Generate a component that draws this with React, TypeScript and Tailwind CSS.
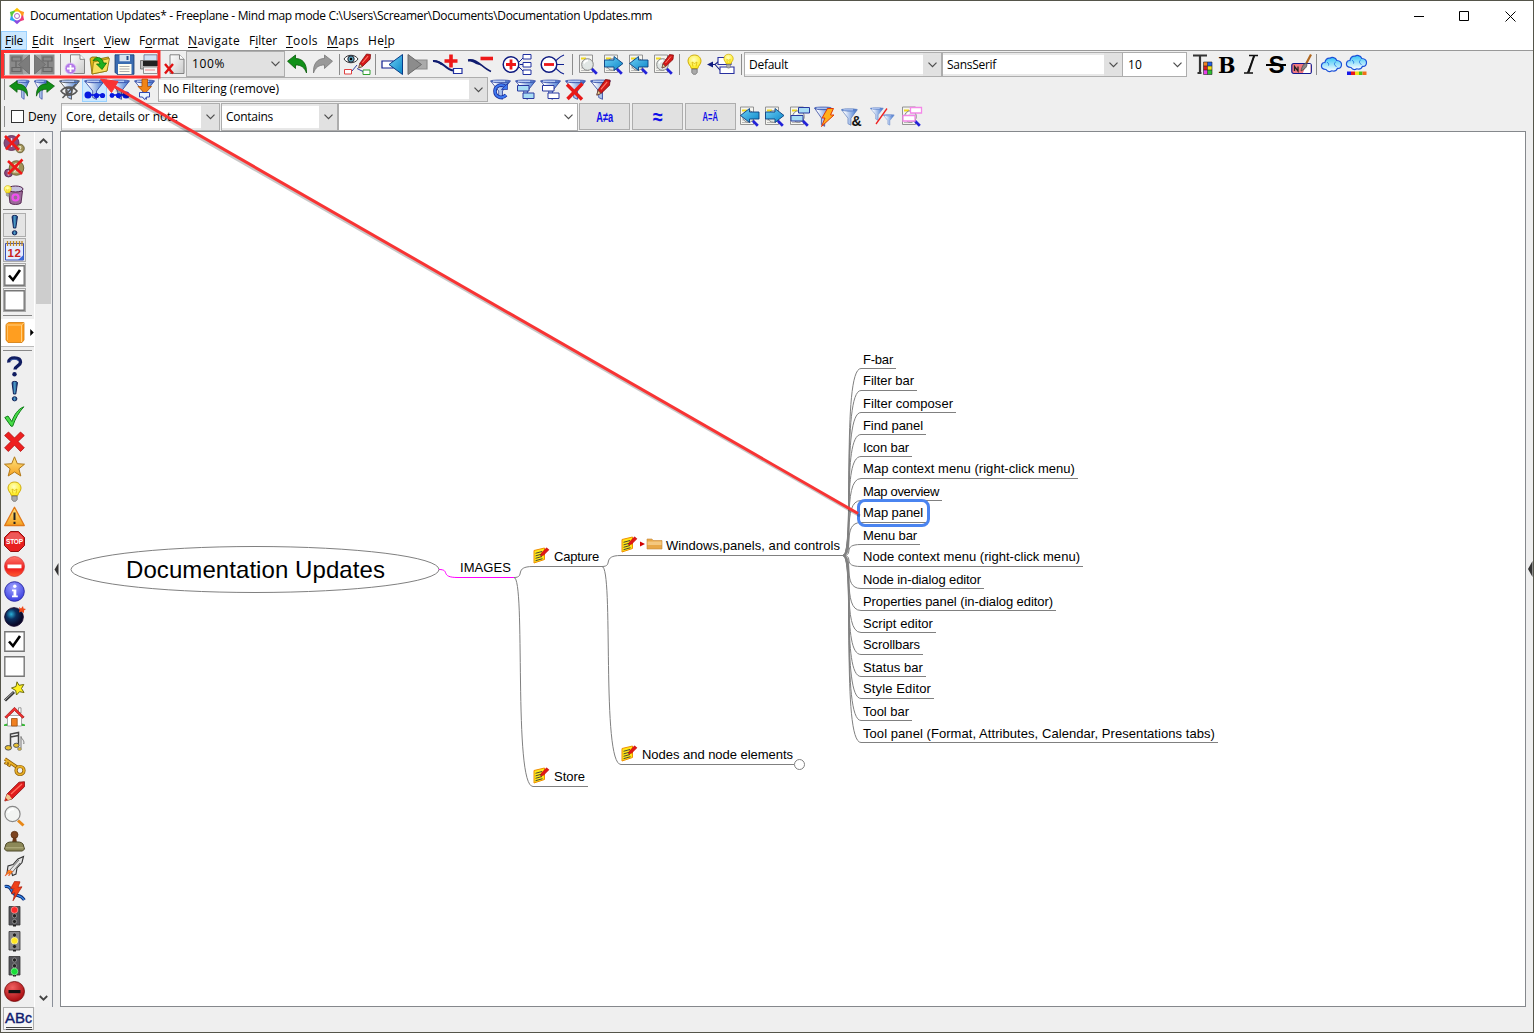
import React, { useLayoutEffect, useRef, useState } from "react";

/* Text tracked so that it fills a given width. */
function Fit({ w, children, className = "" }: { w: number; children: React.ReactNode; className?: string }) {
  const ref = useRef<HTMLSpanElement>(null);
  const [ls, setLs] = useState(0);
  useLayoutEffect(() => {
    const el = ref.current;
    if (!el) return;
    const n = (el.textContent || "").length;
    setLs((w - el.getBoundingClientRect().width) / Math.max(1, n));
  }, [w]);
  return (
    <span ref={ref} className={"inline-block whitespace-pre " + className} style={{ letterSpacing: ls }}>
      {children}
    </span>
  );
}

function Ic({ children, className = "h-[21px] w-[21px]" }: { children: React.ReactNode; className?: string }) {
  return (
    <svg viewBox="0 0 21 21" className={className + " shrink-0 overflow-visible"} fill="none">
      {children}
    </svg>
  );
}

function Cell({ children, className = "w-[25px]" }: { children?: React.ReactNode; className?: string }) {
  return <div className={"flex h-[25px] shrink-0 items-center justify-center " + className}>{children}</div>;
}

function Sep({ className = "w-[5px]" }: { className?: string }) {
  return (
    <div className={"flex h-[25px] shrink-0 items-center justify-center " + className}>
      <div className="h-[21px] w-px bg-[#8c8c8c]" />
    </div>
  );
}

function Chevron() {
  return (
    <svg viewBox="0 0 9 6" className="h-[6px] w-[9px] shrink-0" fill="none">
      <path d="M.5 .7 4.5 4.7 8.5 .7" stroke="#4d4d4d" strokeWidth="1.2" />
    </svg>
  );
}

function Combo({ className, text, w, editable = true }: { className: string; text?: string; w?: number; editable?: boolean }) {
  return (
    <div className={"flex shrink-0 items-center border border-[#adadad] pr-[4px] " + className}>
      <div className={"mr-[5px] flex h-full flex-1 items-center " + (editable ? "border-y-2 border-[#e8e8e8] bg-white pl-[4px]" : "pl-[5px]")}>
        {text && <Fit w={w || 50}>{text}</Fit>}
      </div>
      <Chevron />
    </div>
  );
}

/* ---- shared drawing parts ---- */
const Defs = () => (
  <svg className="absolute h-0 w-0">
    <defs>
      <linearGradient id="fun" x1="0" x2="1" y1="0" y2="0">
        <stop offset="0.15" stopColor="#ffffff" />
        <stop offset="1" stopColor="#3a72d0" />
      </linearGradient>
      <linearGradient id="cy" x1="0" x2="1" y1="0" y2="1">
        <stop offset="0" stopColor="#6fd0f5" />
        <stop offset="1" stopColor="#0a86c8" />
      </linearGradient>
      <linearGradient id="cld" x1="0" x2="0" y1="0" y2="1">
        <stop offset="0" stopColor="#35c4f5" />
        <stop offset="1" stopColor="#ffffff" />
      </linearGradient>
      <linearGradient id="pg" x1="0" x2="1" y1="0" y2="1">
        <stop offset="0" stopColor="#ffffff" />
        <stop offset="1" stopColor="#c9c9c9" />
      </linearGradient>
      <linearGradient id="gold" x1="0" x2="0" y1="0" y2="1">
        <stop offset="0" stopColor="#ffe680" />
        <stop offset="1" stopColor="#f5a020" />
      </linearGradient>
      <linearGradient id="redg" x1="0" x2="0" y1="0" y2="1">
        <stop offset="0" stopColor="#ff7a70" />
        <stop offset="0.6" stopColor="#ee1c1c" />
        <stop offset="1" stopColor="#ff5a30" />
      </linearGradient>
      <linearGradient id="bang" x1="0" x2="1" y1="0" y2="0">
        <stop offset="0" stopColor="#0c2c7c" />
        <stop offset="0.5" stopColor="#4fa0c8" />
        <stop offset="1" stopColor="#0a2468" />
      </linearGradient>
      <radialGradient id="bomb" cx="0.35" cy="0.35" r="0.6">
        <stop offset="0" stopColor="#2ab0d8" />
        <stop offset="0.45" stopColor="#0c3060" />
        <stop offset="1" stopColor="#080828" />
      </radialGradient>
      <radialGradient id="blu" cx="0.45" cy="0.3" r="0.7">
        <stop offset="0" stopColor="#a0a4ff" />
        <stop offset="1" stopColor="#3a3ee0" />
      </radialGradient>
      <radialGradient id="dred" cx="0.4" cy="0.3" r="0.7">
        <stop offset="0" stopColor="#f06060" />
        <stop offset="1" stopColor="#a80c10" />
      </radialGradient>
      <radialGradient id="blb" cx="0.45" cy="0.35" r="0.6">
        <stop offset="0" stopColor="#ffffc0" />
        <stop offset="1" stopColor="#ffec20" />
      </radialGradient>
    </defs>
  </svg>
);

const Funnel = ({ c = "#2c3f9c" }: { c?: string }) => (
  <g>
    <path d="M1 2.500 8.700 12v6.500l3.800 1.800v-8.300L20 2.500z" fill="url(#fun)" stroke={c} strokeWidth=".8" />
    <path d="M.5 2c0-1.300 20-1.300 20 0 0 2.300-20 2.300-20 0z" fill="#5c84d4" stroke={c} strokeWidth=".7" />
    <path d="M3 2.200h12" stroke="#dfe9ff" strokeWidth="1" />
  </g>
);
const Page = () => (
  <g>
    <path d="M3 .8h9.500l4.500 4.500V19.500H3z" fill="url(#pg)" stroke="#777" strokeWidth=".9" />
    <path d="M12.500.8v4.500H17" fill="#fff" stroke="#777" strokeWidth=".9" />
  </g>
);
const Lens = () => (
  <g>
    <path d="M1.500 1H14.500V18.500H1.500z" fill="#f5f5f0" stroke="#888" strokeWidth=".9" />
    <path d="M3 4.500h5" stroke="#f0d820" strokeWidth="2" />
    <path d="M3 14h5M3 16.500h8" stroke="#aaa" strokeWidth=".8" />
    <path d="m13.800 14.800 5 4.900" stroke="#2222d8" strokeWidth="2.800" />
    <circle cx="9.500" cy="10.500" r="5.800" fill="#dfe6e4" fillOpacity=".95" stroke="#888" strokeWidth="1" />
    <path d="M6 9.500c.6-2 2.200-3 4-2.800" stroke="#fff" strokeWidth="1.600" />
  </g>
);
const ArrR = () => <path d="M1.500 6H11V2.500l9 7-9 7V13H1.500z" fill="url(#cy)" stroke="#0c4080" strokeWidth=".9" />;
const ArrL = () => <path d="M20 6h-9.500V2.500l-9 7 9 7V13H20z" fill="url(#cy)" stroke="#0c4080" strokeWidth=".9" />;
const Pen = () => (
  <g>
    <path d="m9 14 1-4.500L16.500.5l4 .5-.5 4.500-7.300 7z" fill="#d41818" stroke="#7c0808" strokeWidth=".7" />
    <path d="m9 14 1-4 2.500 2.500z" fill="#f4cf90" stroke="#444" strokeWidth=".6" />
    <path d="m12.500 9 5.500-6.500" stroke="#ff7a6a" strokeWidth="1" />
  </g>
);
const Undo = ({ c, s }: { c: string; s: string }) => (
  <path d="M.5 7.200 8.500 1v3.500c7 0 11.500 5 11 14.500-2-5.500-5-8-11-8v3.500z" fill={c} stroke={s} strokeWidth=".8" />
);
const Redo = ({ c, s }: { c: string; s: string }) => (
  <g transform="translate(21 0) scale(-1 1)"><Undo c={c} s={s} /></g>
);
const Bulb = () => (
  <g>
    <path d="M10.500 1C6.500 1 4 3.800 4 7.200c0 3 2.800 4.500 3.300 7.300h6.400c.5-2.800 3.300-4.300 3.300-7.300C17 3.800 14.500 1 10.500 1z" fill="url(#blb)" stroke="#c8a400" strokeWidth=".9" />
    <path d="M7.800 15h5.400v3.500l-1.500 1.800H9.300l-1.500-1.800z" fill="#aaa" stroke="#666" strokeWidth=".7" />
    <path d="M9 12.500 8 8l2.500 1.500L13 8l-1 4.500" stroke="#d8b400" strokeWidth=".7" />
  </g>
);
const Cloud = () => (
  <g>
    <path d="M5 13.500C1.500 13.500 0 11.500.5 9.200c.4-2 2-2.800 3.400-2.700C4.500 3.500 6.800 2 9 2.200c1.600-1.200 5.500-1.200 6.800 2.300 3.200.2 5 2 4.700 4.500-.3 2.400-2.200 3.500-4 3.300-1 2.200-3.400 3.300-5.600 2.500-2.200 1.200-4.700.500-5.900-1.300z" fill="url(#cld)" stroke="#1a4fd8" strokeWidth="1.200" />
    <path d="M6 6.500c1.500 0 2 1.500 1.500 3M14.500 6c-1.500 1-1.500 3.500 1 4.500" stroke="#1a6fe0" strokeWidth=".9" />
  </g>
);
const CheckBox = ({ on }: { on?: boolean }) => (
  <g>
    <path d="M.8.8h19.400v19.400H.8z" fill="#fff" stroke="#777" strokeWidth="1.400" />
    {on && <path d="m5 10.500 4 4.500 7-10" stroke="#000" strokeWidth="2.600" />}
  </g>
);
const Note = () => (
  <svg viewBox="0 0 16 17" className="h-[17px] w-[16px] overflow-visible" fill="none">
    <path d="M1 3.500 11.500 1v11.500L1 16z" fill="#ffe818" stroke="#f09000" strokeWidth="1" />
    <path d="m2.500 6.300 6.500-1.800M2.500 8.900 9 7M2.500 11.300 9 9.500M2.500 13.700 9.500 11.700" stroke="#333" strokeWidth=".9" />
    <path d="m7.500 9 1-3L13.500.8l2.500 2-5.500 5.500z" fill="#e01818" stroke="#b00" strokeWidth=".5" />
  </svg>
);
const Bang = () => (
  <g>
    <path d="M8 1.500c0-1.500 5.500-1.500 5.500 0L11.800 13H9.500z" fill="url(#bang)" stroke="#081850" strokeWidth=".9" />
    <ellipse cx="10.600" cy="17.800" rx="2.300" ry="2.100" fill="url(#bang)" stroke="#081850" strokeWidth=".9" />
  </g>
);
const Light = ({ on }: { on: number }) => (
  <g>
    <path d="M5 .5h11V19H5z" fill={on === 1 ? "#88888c" : "#55555a"} stroke="#333" strokeWidth=".8" />
    <path d="M9 19h3v1.500H9z" fill="#222" />
    {[4, 9.8, 15.5].map((y, i) => (
      <circle key={i} cx="10.500" cy={y} r={i === on ? 3.3 : 2.1} fill={i === on ? ["#ff2a2a", "#ffe820", "#18e038"][i] : "#222"} stroke={i === on ? ["#ff9090", "#fff6a0", "#80f090"][i] : "#999"} strokeWidth=".8" />
    ))}
  </g>
);
const Badge = ({ flip }: { flip?: boolean }) => (
  <g>
    <circle cx={flip ? 4.5 : 7.5} cy={flip ? 14 : 9} r={flip ? 4 : 7.5} fill="#8a4a7c" stroke="#55224c" strokeWidth=".8" />
    <path d={flip ? "M4.500 11.500v5" : "M7.500 4v9"} stroke="#ecd8e8" strokeWidth="1.500" />
    <circle cx={flip ? 12.5 : 16} cy={flip ? 9 : 14.5} r={flip ? 7.3 : 4.3} fill="#a09258" stroke="#5c5228" strokeWidth=".8" />
    <path d={flip ? "M10 6c3-3 6 0 3.500 3L10 13h6" : "M14.500 13.500c1.500-2 3.500-.5 1.500 1.500l-1.500 1.800h3"} stroke="#eee8c8" strokeWidth="1.100" />
    <path d={flip ? "m4 2 14 13M18.500.5 4 15" : "m1 2 14 14M15.500.5 2 15.500"} stroke="#f01818" strokeWidth="2.600" />
  </g>
);

const sideTop = [
  <Badge />,
  <Badge flip />,
  <g>
    <path d="M4.500 7h14l-1.500 12c-2 2-9 2-11 0z" fill="#9a6a98" stroke="#50204c" strokeWidth=".9" />
    <ellipse cx="11.500" cy="5" rx="7.500" ry="3" fill="#c4c0dc" stroke="#50204c" />
    <circle cx="11.500" cy="13.500" r="3" stroke="#f050f0" strokeWidth="2.200" />
    <g transform="translate(-2 1) scale(.55)"><Bulb /></g>
  </g>,
];
const sideBoxed = [
  <Bang />,
  <g>
    <path d="M1.500 3.500h18V20h-18z" fill="#e4ecff" stroke="#3850b8" strokeWidth="1" />
    <path d="M14 20h5.500v-5z" fill="#3a68d8" />
    <path d="M3.500 1v5M6.500 1v5M9.500 1v5M12.500 1v5M15.500 1v5M18 1v5" stroke="#c08820" strokeWidth="1.300" />
    <text x="3.500" y="16.500" fontSize="11.500" fontWeight="700" fill="#c82020" fontFamily="Liberation Sans, sans-serif" textLength="13.500">12</text>
  </g>,
];
const sideMain = [
  <g>
    <path d="M4.800 6.500C4.500 3.500 7 2 10.500 2c3.500 0 6 1.300 6 4.300 0 3.500-5.500 3.700-5.500 7.200" stroke="#101c60" strokeWidth="3.400" />
    <path d="M6 5C7 3 13 2.500 14.500 5" stroke="#4a70c0" strokeWidth=".8" />
    <circle cx="10.500" cy="18.300" r="2.200" fill="#101c60" />
  </g>,
  <Bang />,
  <path d="M.8 11.500 4 10l3.800 5.500C10 9 14 3 19.800.8 15 6 11 13 8.700 20.200H7z" fill="#48dc48" stroke="#108018" strokeWidth="1" />,
  <path d="M4.500 1 10.500 7l6-6 3.800 3.500-6.300 6 6.300 6.300-3.800 3.700-6-6.300L4.300 20.500.6 16.800l6.300-6.300L.6 4.500z" fill="#ee2020" stroke="#b00c0c" strokeWidth=".8" />,
  <path d="m10.500.8 2.800 6.900 7.200.5-5.600 4.600 1.900 7.200-6.300-4-6.300 4 1.900-7.200L.5 8.200l7.200-.5z" fill="url(#gold)" stroke="#b07818" strokeWidth="1" />,
  <Bulb />,
  <g>
    <path d="M10.500 1.200 20.300 19.500H.7z" fill="url(#gold)" stroke="#e07818" strokeWidth="1.300" strokeLinejoin="round" />
    <path d="M10.500 6.500v7.500M10.500 15.700v2.300" stroke="#222" strokeWidth="2" />
  </g>,
  <g>
    <path d="M6.500.5h8l6 6v8l-6 6h-8l-6-6v-8z" fill="#e82020" stroke="#901010" strokeWidth="1" />
    <path d="M7 1.500h7l5 5v3H2v-3z" fill="#fff" fillOpacity=".25" />
    <text x="2" y="13" fontSize="6.500" fontWeight="700" fill="#fff" fontFamily="Liberation Sans, sans-serif" textLength="17">STOP</text>
  </g>,
  <g><circle cx="10.500" cy="10.500" r="10" fill="url(#redg)" stroke="#d03030" strokeWidth=".7" /><path d="M3.500 8.500h14v3.800h-14z" fill="#fff" /></g>,
  <g>
    <circle cx="10.500" cy="10.500" r="9.800" fill="url(#blu)" stroke="#3030a8" strokeWidth="1" />
    <circle cx="10.800" cy="5.300" r="1.700" fill="#fff" />
    <path d="M8 8.500h4.300v6h1.500v1.800H8v-1.800h1.500v-4.200H8z" fill="#fff" />
  </g>,
  <g>
    <circle cx="10" cy="11" r="9.300" fill="url(#bomb)" stroke="#180c30" strokeWidth="1" />
    <path d="m15 1 2 1.500L19 0l.5 2.500L22 3l-2 1.500L20 7l-2.500-1.500L15 6.500l.5-2.500z" fill="#f04818" />
  </g>,
  <CheckBox on />,
  <CheckBox />,
  <g>
    <path d="m1 19.500 9-8.500" stroke="#333" strokeWidth="3" /><path d="m1 19 8.500-8" stroke="#aaa" strokeWidth="1" />
    <path d="m13 .8 2 3.500 4.800-.8-2.300 4 2.500 4-4.500-.8L12.500 14l-.8-4.500L7.500 7l4.500-1.500z" fill="#fff020" stroke="#6c6c10" strokeWidth="1" />
  </g>,
  <g>
    <path d="M0 18.500c6-2.500 15-2.500 21 0V20H0z" fill="#38b838" />
    <path d="M3.500 9.500h14V20h-14z" fill="#fff" stroke="#888" strokeWidth=".7" />
    <path d="M14.500 1.800h2.500V7h-2.500z" fill="#fff" stroke="#777" strokeWidth=".7" />
    <path d="M.8 11 10.500 1.300 20.200 11l-1.700 1.200-8-7.700-8 7.700z" fill="#f03030" stroke="#a01818" strokeWidth=".7" />
    <path d="M7.500 12.500h5.700V20H7.500z" fill="#f08020" stroke="#a05010" strokeWidth=".8" />
  </g>,
  <g>
    <path d="M6.500 16V3l8-1.500V13.500M6.500 6l8-1.500" stroke="#444" strokeWidth="1.500" />
    <ellipse cx="4.300" cy="16.800" rx="3.200" ry="2.300" fill="#e8c030" stroke="#555" /><ellipse cx="12.300" cy="14.300" rx="2.800" ry="2.100" fill="#e8c030" stroke="#555" />
    <path d="M17 17V5.500c.5 3 3.500 3 2.800 7.500" stroke="#777" strokeWidth="1" /><ellipse cx="15.500" cy="18" rx="2" ry="1.400" fill="#e8c030" stroke="#777" strokeWidth=".7" />
  </g>,
  <g>
    <path d="m1 3 12.500 8.500M3 4.500l-1.500 4M6 6.800 4.500 10.500" stroke="#8c5c08" strokeWidth="3.400" /><path d="m1 3 12.500 8.500M3 4.500 2 8M6 6.800 5 10" stroke="#e8b028" strokeWidth="1.900" />
    <circle cx="16" cy="14.500" r="4" stroke="#8c5c08" strokeWidth="3.200" /><circle cx="16" cy="14.500" r="4" stroke="#e8b028" strokeWidth="1.800" />
  </g>,
  <g>
    <path d="m.8 20 2.200-7L15 1.200l5.500-.5v5L8 18z" fill="#e01c1c" stroke="#881010" strokeWidth=".8" />
    <path d="m.8 20 2.200-7 2.500 1.500L8 18z" fill="#f0c890" /><path d="m.8 20 1-3 2 2z" fill="#c00c0c" /><path d="m7 13 11-10" stroke="#ff7060" strokeWidth="1.300" />
  </g>,
  <g>
    <path d="m14 14.500 5.500 5" stroke="#e88818" strokeWidth="3" />
    <circle cx="8.500" cy="8" r="7.600" fill="#f2f4f2" stroke="#888" strokeWidth="1.200" /><path d="M4 7c1-3 4-4 6-3.500" stroke="#fff" strokeWidth="2" />
  </g>,
  <g>
    <circle cx="10.500" cy="3.800" r="3.500" fill="#7c4420" stroke="#502808" strokeWidth=".7" /><path d="M9 7h3.200l.8 5H8z" fill="#6c3818" />
    <path d="M2 13c2-2.500 5-2 8.500-2s6.500-.5 8.500 2l1.500 5-2 2h-16l-2-2z" fill="#8c8858" stroke="#4c4828" strokeWidth="1" /><path d="M1.500 16.800h18" stroke="#c4c090" strokeWidth=".8" />
  </g>,
  <g>
    <path d="m3 17 1-7 5-1.500L14 3l5.500-2.500-1.500 6-5 5.500-1 6-3.500 1.500-1-3.500z" fill="#e4e4e4" stroke="#333" strokeWidth="1.100" />
    <path d="m6 14 9-10M8.500 16 16 7" stroke="#555" strokeWidth=".8" /><path d="m4.500 14-3.500 6 4.500-3.500-.8 3.500 4-4.500z" fill="#ff8c18" stroke="#e03810" strokeWidth=".5" />
  </g>,
  <g>
    <path d="M.8 5.500c7-1 6 5.500 10 8 3 1.500 6 0 9.500 5.500" stroke="#102c70" strokeWidth="3.200" /><path d="M.8 5.500c7-1 6 5.500 10 8 3 1.500 6 0 9.500 5.500" stroke="#3888e8" strokeWidth="1.300" />
    <path d="M10.500.5 16 .8l-2 5.500 4-.5-9 14 2-8-3.500 1 2.500-5.500-3.500.5z" fill="#f04018" stroke="#a81808" strokeWidth=".7" />
  </g>,
  <Light on={0} />,
  <Light on={1} />,
  <Light on={2} />,
  <g><circle cx="10.500" cy="10.500" r="10" fill="url(#dred)" stroke="#700808" strokeWidth=".8" /><path d="M4.500 9h12v3.200h-12z" fill="#111" /></g>,
];

const leaves: [string, number, number][] = [
  ["F-bar", 30, 0], ["Filter bar", 51, 1], ["Filter composer", 90, 0], ["Find panel", 60, 0], ["Icon bar", 46, 0],
  ["Map context menu (right-click menu)", 212, 1], ["Map overview", 76, 0], ["Map panel", 60, 1], ["Menu bar", 54, 0],
  ["Node context menu (right-click menu)", 217, 1], ["Node in-dialog editor", 118, 0], ["Properties panel (in-dialog editor)", 190, 0],
  ["Script editor", 70, 0], ["Scrollbars", 57, 1], ["Status bar", 60, 0], ["Style Editor", 68, 1], ["Tool bar", 46, 0],
  ["Tool panel (Format, Attributes, Calendar, Presentations tabs)", 352, 0],
];

const menus: [string, number, number][] = [
  ["File", 0, 18], ["Edit", 0, 22], ["Insert", 2, 32], ["View", 0, 26], ["Format", 1, 40], ["Navigate", 0, 52],
  ["Filter", 1, 28], ["Tools", 0, 32], ["Maps", 0, 32], ["Help", 2, 27],
];

function MindMap() {
  return (
    <div className="relative h-full w-full font-['Liberation_Sans',Arial,sans-serif] text-[13px] leading-[16px] text-black">
      {/* canvas starts at (61,132) in the window */}
      <svg viewBox="61 132 1464 874" className="absolute inset-0 h-full w-full" fill="none" stroke="#808080">
        <ellipse cx="255" cy="569.500" rx="184" ry="23" />
        <path d="M439 569.500C451 569.500 439 577.500 458 577.500H515" stroke="#f0f" />
        <path d="M458 577.500H515" />
        <path d="M514 577.500C526 577.500 513 566.500 533 566.500H602" />
        <path d="M514 577.500C526 577.500 513 786.500 533 786.500H588" />
        <path d="M602 566.500C614 566.500 601 555.500 621 555.500H843" />
        <path d="M602 566.500C614 566.500 601 764.500 621 764.500H794" />
        <circle cx="799.500" cy="764.500" r="5" fill="#fff" />
        <path d="M458 577.500H514" stroke="#f0f" />
        {leaves.map(([t, w], i) => (
          <path key={t} d={`M843 555.500C855 555.500 841 ${368.5 + 22 * i} 861 ${368.5 + 22 * i}H${866 + w}`} />
        ))}
      </svg>
      <div className="absolute left-[65px] top-[423px] text-[24px] leading-[30px]"><Fit w={259}>Documentation Updates</Fit></div>
      <div className="absolute left-[399px] top-[428px]"><Fit w={51}>IMAGES</Fit></div>
      <div className="absolute left-[472px] top-[415px] flex items-end gap-[5px]"><Note /><Fit w={45} className="relative top-px">Capture</Fit></div>
      <div className="absolute left-[472px] top-[635px] flex items-end gap-[5px]"><Note /><Fit w={31} className="relative top-px">Store</Fit></div>
      <div className="absolute left-[560px] top-[613px] flex items-end gap-[5px]"><Note /><Fit w={151} className="relative top-px">Nodes and node elements</Fit></div>
      <div className="absolute left-[560px] top-[404px] flex items-end">
        <Note />
        <svg viewBox="0 0 24 17" className="ml-[3px] mr-[2px] h-[17px] w-[24px]">
          <path d="M0 5.500v5l5-2.500z" fill="#d00000" />
          <path d="M7 3h5l1 1.500h9V13H7z" fill="#e8a848" stroke="#c88838" strokeWidth=".6" />
          <path d="M7.500 5.500h14V9h-14z" fill="#f4c880" />
        </svg>
        <Fit w={174} className="relative top-px">Windows,panels, and controls</Fit>
      </div>
      <div className="absolute left-[796px] top-[367px] h-[28px] w-[73px] rounded-[8px] border-[3px] border-[#4a84f0]" />
      <div className="absolute left-[802px] top-[220px] flex flex-col">
        {leaves.map(([t, w, up]) => (
          <div key={t} className="h-[22px]"><Fit w={w} className={up ? "relative -top-px" : ""}>{t}</Fit></div>
        ))}
      </div>
    </div>
  );
}

const GreyNode = ({ flip }: { flip?: boolean }) => (
  <g transform={flip ? "translate(21 0) scale(-1 1)" : undefined}>
    <path d="M.5.500h14v20H.5z" fill="#8a8a8a" />
    <path d="M3 3h9v4H3zM3 13.500h9v4H3zM7 7v6.500" stroke="#666" strokeWidth="1.200" />
    <path d="M14 .5h6.500v20H14z" fill="#a4a4a4" />
    <path d="M20.500 1v19L9.500 10.500z" fill="#7c7c7c" stroke="#6a6a6a" strokeWidth=".8" />
  </g>
);

export default function App() {
  return (
    <div className="relative flex h-[1033px] w-[1534px] flex-col overflow-hidden border border-[#55554a] bg-[#efefef] font-['Open_Sans','Noto_Sans',sans-serif] text-[12px] leading-[16px] text-black">
      <Defs />
      {/* title bar */}
      <div className="flex h-[30px] shrink-0 items-center bg-white pb-px pl-[8px]">
        <svg viewBox="0 0 16 16" className="h-[16px] w-[16px] shrink-0 overflow-visible">
          {["#ffc400", "#ff9a20", "#f03a78", "#8a4be0", "#30a8f0", "#58c840"].map((c, i) => (
            <path key={c} d="M4.500 3 8-.2 11.500 3l-1.500 2h-4z" fill={c} transform={`rotate(${i * 60} 8 8)`} />
          ))}
          <circle cx="8" cy="8" r="4.400" fill="#fff" />
          <circle cx="8" cy="8" r="2.500" fill="#fff" stroke="#b06ac0" strokeWidth="1" />
        </svg>
        <Fit w={622} className="ml-[5px]">Documentation Updates* - Freeplane - Mind map mode C:\Users\Screamer\Documents\Documentation Updates.mm</Fit>
        <div className="flex-1" />
        <svg viewBox="0 0 102 12" className="mr-[17px] h-[12px] w-[102px] shrink-0" fill="none" stroke="#000" strokeWidth="1">
          <path d="M0 6.500h10" />
          <path d="M45.500 1.500h9v9h-9z" />
          <path d="m91.500 1.500 10 10M101.500 1.500l-10 10" />
        </svg>
      </div>
      {/* menu bar */}
      <div className="flex h-[20px] shrink-0 items-stretch gap-px border-b border-[#999] bg-white">
        {menus.map(([m, u, w], i) => (
          <div key={m} className={"flex items-center border px-[3px] " + (i === 0 ? "border-[#99d1ff] bg-[#cce8ff]" : "border-transparent")}>
            <Fit w={w}>
              {m.slice(0, u)}<span className="underline underline-offset-2">{m[u]}</span>{m.slice(u + 1)}
            </Fit>
          </div>
        ))}
      </div>
      {/* main toolbar */}
      <div className="flex h-[26px] shrink-0 items-end">
        <Sep className="w-[6px]" />
        <Cell><Ic><GreyNode /></Ic></Cell>
        <Cell><Ic><GreyNode flip /></Ic></Cell>
        <Sep className="w-[5px] pl-[2px]" />
        <Cell><Ic><g transform="translate(3.500 0)"><Page /></g><circle cx="6.500" cy="14.500" r="5.500" fill="#b47ae8" stroke="#e0c8f8" strokeWidth=".8" /><path d="M6.500 11v7M3 14.500h7" stroke="#fff" strokeWidth="1.800" /></Ic></Cell>
        <Cell><Ic><path d="M1 4.500 3 3h5l1.500 2 10-2-1.500 14L3 20z" fill="#e0b818" stroke="#7c6408" strokeWidth=".8" /><path d="M3 20 4.500 8 20.500 4.500 18 17z" fill="#f8e060" stroke="#8c7408" strokeWidth=".8" /><path d="M4 7c2-5 9-5 10.500 2h3L13 15.500 7.500 10H11C10 6 7 5.500 4 7z" fill="#20b020" stroke="#087008" strokeWidth=".8" /></Ic></Cell>
        <Cell><Ic><path d="M1 .8h19v19.500H3l-2-2z" fill="#3a6cb0" stroke="#1c3c70" strokeWidth=".8" /><path d="M5.500.8h10.500v6.500H5.500z" fill="#d8e4f0" /><path d="M12.500 2h2v4h-2z" fill="#244c88" /><path d="M4 10h13.500v10H4z" fill="#fffef0" /><path d="M5.500 12.500h10M5.500 15h10M5.500 17.500h10" stroke="#999" strokeWidth=".8" /></Ic></Cell>
        <Cell><Ic><path d="M5 .8h13V8H5z" fill="#cfe0f4" stroke="#668" strokeWidth=".8" /><path d="M1.500 6.500h19V15h-19z" fill="#bbb" stroke="#666" strokeWidth=".8" /><path d="M4 7h15v5H4z" fill="#222" /><path d="M4.500 13h14v6.500h-14z" fill="#f5f5f5" stroke="#777" strokeWidth=".8" /><path d="M6 16h10" stroke="#e88" /></Ic></Cell>
        <Cell><Ic><g transform="translate(3 0)"><Page /></g><path d="m1 10 8 9.500M9 10 1 19.500" stroke="#e01010" strokeWidth="2.400" /></Ic></Cell>
        <Combo className="-ml-px h-[26px] w-[99px] bg-[#e1e1e1]" editable={false} text="100%" w={33} />
        <Cell><Ic><Undo c="#109018" s="#085808" /></Ic></Cell>
        <Cell><Ic><Redo c="#999" s="#777" /></Ic></Cell>
        <Sep className="w-[8px]" />
        <Cell className="w-[28px]">
          <Ic>
            <path d="M-3 5C0 0 8 0 11 5 8 10 0 10-3 5z" fill="#fff" stroke="#333" /><circle cx="4" cy="5" r="3.200" fill="#5aa0b8" stroke="#223" /><circle cx="4" cy="5" r="1.200" fill="#000" />
            <path d="M-2.500 15.500h7v4.500h-7z" fill="#fff" stroke="#e04040" /><path d="M16 16h7v4.500h-7z" fill="#fff" stroke="#30a030" /><path d="m5 17 5-6M16 17.500l-6-3" stroke="#3040a0" />
            <g transform="translate(2.500 -.5) scale(1.030)"><Pen /></g>
          </Ic>
        </Cell>
        <Sep className="w-[9px]" />
        <Cell><Ic><path d="M0 7h11v7H0z" fill="#fff" stroke="#102090" strokeWidth="1.200" /><path d="M20.500.5v20L7 10.500z" fill="url(#cy)" stroke="#083c88" strokeWidth="1" /></Ic></Cell>
        <Cell><Ic><path d="M9 6h11v9H9z" fill="#aaa" stroke="#8c8c8c" strokeWidth="1.200" /><path d="M1 .5v20l13.500-10z" fill="#8c8c8c" stroke="#6c6c6c" strokeWidth="1" /></Ic></Cell>
        <Cell className="w-[35px]"><Ic><path d="M-4 7C5 6 8 15 16 16.500" stroke="#101c70" strokeWidth="2" /><path d="M-4 6.500C2 6 5 9 8 11.500L4 11C2 9-1 8-4 8z" fill="#101c70" /><path d="M16.500 14.500h8.500v5h-8.500z" fill="#fff" stroke="#2030a0" strokeWidth="1.200" /><path d="M14 .5v13M7.500 7h13" stroke="#ee1818" strokeWidth="3.600" /></Ic></Cell>
        <Cell className="w-[32px]"><Ic><path d="M-3 6C7 4.500 11 14 20 17.500" stroke="#101c70" strokeWidth="1.600" /><path d="M-3 6C3 5 7 8 10 11.500L5 10C2 8 0 7.500-3 7.500z" fill="#101c70" /><path d="M9.500 4.500h12.500" stroke="#ee1818" strokeWidth="3.600" /></Ic></Cell>
        <Cell className="w-[40px]"><Ic><path d="M12 8 17 3h7M13 10.500h11M12 13l5 5h7" stroke="#102090" strokeWidth="1" /><circle cx="4" cy="10.500" r="7.800" fill="#fff" stroke="#101c80" strokeWidth="1.500" /><path d="M4 5.500v10M-1 10.500H9" stroke="#ee1818" strokeWidth="2.800" /><path d="M16 .5h8v4.500h-8zM16 8.500h8v4.500h-8zM16 16h8v4.500h-8z" fill="#fff" stroke="#2030a0" /></Ic></Cell>
        <Cell className="w-[30px]"><Ic><path d="M13 7c3-1 3-4 9-6M14 10.500h8M13 14c3 1 3 4 9 6" stroke="#102090" strokeWidth="1.200" /><circle cx="7" cy="10.500" r="7.800" fill="#fff" stroke="#101c80" strokeWidth="1.500" /><path d="M2 10.500h10" stroke="#ee1818" strokeWidth="2.800" /></Ic></Cell>
        <Sep className="w-[9px] pl-px" />
        <Cell><Ic><Lens /></Ic></Cell>
        <Cell><Ic><Lens /><ArrR /></Ic></Cell>
        <Cell><Ic><Lens /><ArrL /></Ic></Cell>
        <Cell><Ic><Lens /><Pen /></Ic></Cell>
        <Sep className="w-[6px]" />
        <Cell><Ic><Bulb /></Ic></Cell>
        <Cell className="w-[31px]"><Ic><path d="M-1 10.500h4l6-5M3 10.500l5 5.500h3" stroke="#101c80" strokeWidth="1.100" /><path d="m-5 10.500 6-3v6z" fill="#101c80" /><path d="M6 3.500h13v7H6zM8 13h14v6.500H8z" fill="#fff" stroke="#2830a0" strokeWidth="1.100" /><g transform="translate(9 -.5) scale(.72)"><Bulb /></g></Ic></Cell>
        <Sep className="w-[6px]" />
        <Combo className="h-[25px] w-[198px] bg-[#e1e1e1]" text="Default" w={39} />
        <Combo className="h-[25px] w-[181px] bg-[#e1e1e1]" text="SansSerif" w={49} />
        <Combo className="-ml-px h-[25px] w-[65px] bg-white" editable={false} text="10" w={14} />
        <Cell className="ml-[3px] w-[25px]"><Ic><path d="M1 1.500h14M8 1.500V19M5.500 19h4" stroke="#333" strokeWidth="2.200" /><path d="M11.500 8h4v4h-4z" fill="#f08020" /><path d="M15.500 8h4.500v4h-4.500z" fill="#2060e8" /><path d="M11.500 12h4v4h-4z" fill="#e01818" /><path d="M15.500 12h4.500v4h-4.500z" fill="#f0e018" /><path d="M11.500 16h4v4.500h-4z" fill="#e840e8" /><path d="M15.500 16h4.500v4.500h-4.500z" fill="#30c030" /><path d="M11.500 8H20v12.500h-8.500zM15.500 8v12.500M11.500 12H20M11.500 16H20" stroke="#222" strokeWidth=".6" /></Ic></Cell>
        <Cell className="w-[24px] font-['DejaVu_Serif',serif] text-[23px] font-bold leading-[25px]"><span className="scale-x-[.9]">B</span></Cell>
        <Cell><Ic><path d="M8 1.500h9M3 19h9M13.500 1.500 6.500 19" stroke="#111" strokeWidth="1.300" /><path d="M13 2 7.500 18.500" stroke="#111" strokeWidth="2" /></Ic></Cell>
        <Cell className="w-[25px] font-['Liberation_Sans',sans-serif] text-[24px] font-bold leading-[25px]"><div className="relative">S<div className="absolute -left-[2px] top-[12px] h-[2px] w-[20px] bg-black" /></div></Cell>
        <Cell><Ic><rect x=".8" y="9.500" width="19.500" height="10" rx="2" fill="#f07880" stroke="#101890" strokeWidth="1.200" /><path d="M15 10h4.500v9H12z" fill="#fff" /><path d="M3.500 17v-4.500l3.500 4.500v-4.500" stroke="#222" strokeWidth="1.300" /><path d="M20 .5 15.500 9" stroke="#b06820" strokeWidth="2.200" /><path d="M10 17c1-5 3-8 5.500-8 1.500 3-1 6-5.500 8z" fill="#888" stroke="#333" strokeWidth=".6" /></Ic></Cell>
        <Sep className="w-[5px]" />
        <Cell><Ic><g transform="translate(0 2)"><Cloud /></g></Ic></Cell>
        <Cell><Ic><Cloud /><path d="M1 17.500h4V21H1z" fill="#1818e8" /><path d="M5 17.500h4V21H5z" fill="#e81818" /><path d="M9 17.500h4V21H9z" fill="#f0e018" /><path d="M13 17.500h3.500V21H13z" fill="#48c018" /><path d="M16.500 17.500h4V21h-4z" fill="#f07018" /></Ic></Cell>
      </div>
      {/* filter toolbar */}
      <div className="flex h-[25px] shrink-0 items-center">
        <Sep className="w-[6px]" />
        <Cell><Ic><g transform="translate(7 0) scale(.65 1)"><Funnel /></g><g transform="translate(0 1) scale(.95 .85)"><Undo c="#109018" s="#085808" /></g></Ic></Cell>
        <Cell><Ic><g transform="translate(0 0) scale(.65 1)"><Funnel /></g><g transform="translate(1 1) scale(.95 .85)"><Redo c="#109018" s="#085808" /></g></Ic></Cell>
        <Cell><Ic><Funnel c="#444" /><path d="M2 12c4-5.500 12-5.500 16 0-4 5.500-12 5.500-16 0z" stroke="#555" strokeWidth="1.500" /><circle cx="10" cy="12" r="3" stroke="#555" strokeWidth="1.500" /><path d="M3.500 19 17 5" stroke="#555" strokeWidth="1.500" /></Ic></Cell>
        <div className="flex h-[24px] w-[25px] items-center justify-center border border-[#99d1ff] bg-[#cce8ff]"><Ic><Funnel /><path d="M3 16h16" stroke="#0818e0" strokeWidth="1.600" /><circle cx="4" cy="16" r="3.500" fill="#0818e0" /><circle cx="12.500" cy="16.500" r="2.600" fill="#0818e0" /><circle cx="18.500" cy="16.500" r="2.600" fill="#0818e0" /></Ic></div>
        <Cell><Ic><Funnel /><path d="M3 16h14" stroke="#0818e0" strokeWidth="1.600" /><circle cx="3" cy="16.500" r="2.400" fill="#0818e0" /><circle cx="9.500" cy="16.500" r="2.600" fill="#0818e0" /><circle cx="17" cy="16" r="3.600" fill="#0818e0" /></Ic></Cell>
        <Cell><Ic><Funnel /><path d="M8 0h5.500v7.500h4L11 14.500 4 7.500h4z" fill="#f08418" stroke="#b05008" strokeWidth=".8" /><path d="M5.500 13.500h10v4.500h-3l-2 2.500-2-2.500h-3z" fill="#e8f4ff" stroke="#3048b0" strokeWidth="1" /></Ic></Cell>
        <Combo className="ml-px h-[25px] w-[330px] bg-[#e1e1e1] [&_span]:relative [&_span]:-top-px" text="No Filtering (remove)" w={116} />
        <Cell><Ic><Funnel /><path d="M16 8c-5-4-11-1-11 4 0 6 7 8.500 11 4" stroke="#1c2c98" strokeWidth="3.600" /><path d="M16 8c-5-4-11-1-11 4 0 6 7 8.500 11 4" stroke="#3c78f0" strokeWidth="2" /><path d="M11.500 10.500h6V4.500z" fill="#3c78f0" stroke="#1c2c98" strokeWidth=".7" /></Ic></Cell>
        <Cell><Ic><Funnel /><path d="M2.500 6.500h11.500v5.500H2.500zM8 14h11v5.500H8z" fill="#a8dcf4" stroke="#2838a0" /></Ic></Cell>
        <Cell><Ic><Funnel /><path d="M2.500 6.500h11.500v5.500H2.500zM8 14h11v5.500H8z" fill="#fff" stroke="#2838a0" /></Ic></Cell>
        <Cell><Ic><Funnel /><path d="m2 5.500 15 15M17.500 4.500 2.500 20" stroke="#e81818" strokeWidth="3.400" /></Ic></Cell>
        <Cell><Ic><Funnel /><g transform="translate(-3.500 0) scale(1.150)"><Pen /></g></Ic></Cell>
      </div>
      {/* quick-find toolbar */}
      <div className="flex h-[29px] shrink-0 items-center">
        <Sep className="w-[6px]" />
        <div className="ml-[4px] h-[13px] w-[13px] border border-[#333] bg-white" />
        <Fit w={28} className="ml-[4px]">Deny</Fit>
        <Combo className="ml-[5px] h-[28px] w-[159px] bg-[#e1e1e1]" text="Core, details or note" w={112} />
        <Combo className="ml-px h-[28px] w-[117px] bg-[#e1e1e1]" text="Contains" w={47} />
        <Combo className="h-[28px] w-[240px] bg-white" editable={false} />
        <div className="ml-px flex gap-[2px] font-['Liberation_Sans',sans-serif] text-[14px] text-[#1010e8]">
          {["A≠a", "≈", "A=Ä"].map((t, i) => (
            <div key={t} className="flex h-[27px] w-[51px] items-center justify-center border border-[#adadad] bg-[#e1e1e1]">
              <span className={i === 1 ? "scale-x-[.85] text-[21px] font-bold" : i === 2 ? "scale-x-[.58] text-[13px] font-bold" : "scale-x-[.66] font-bold"}>{t}</span>
            </div>
          ))}
        </div>
        <Cell className="ml-px w-[25px]"><Ic><Lens /><ArrL /></Ic></Cell>
        <Cell><Ic><Lens /><ArrR /></Ic></Cell>
        <Cell><Ic><Lens /><path d="M9.500 1.500h11v5.500h-11zM2 9.500h12v5.500H2z" fill="#a8dcf4" stroke="#2838a0" /></Ic></Cell>
        <Cell><Ic><g transform="scale(.85 1)"><Funnel /></g><path d="M13.500 2.500h6L16.500 9h3.500L7.500 20.500 11 12H8z" fill="#ffb018" stroke="#e03808" strokeWidth="1" /></Ic></Cell>
        <Cell className="w-[28px]"><Ic><g transform="translate(0 2) scale(.8 .85)"><Funnel c="#5878b8" /></g><text x="10.500" y="20" fontSize="14" fontWeight="700" fill="#111" fontFamily="Liberation Sans, sans-serif">&amp;</text></Ic></Cell>
        <Cell className="w-[35px]"><Ic><g transform="translate(-2 1) scale(.65)"><Funnel c="#6888c8" /></g><g transform="translate(11 8) scale(.55)"><Funnel c="#6888c8" /></g><path d="m4 18 11-15.500" stroke="#ee2020" strokeWidth="1.300" /></Ic></Cell>
        <Cell className="w-[22px]"><Ic><Lens /><path d="M9.500 1.500h11v5.500h-11zM2 9.500h12v5.500H2z" fill="#fff" stroke="#f488e8" strokeWidth="1.300" /></Ic></Cell>
      </div>
      {/* body */}
      <div className="flex h-[876px] shrink-0">
        <div className="flex w-[52px] shrink-0 border-r border-t border-[#8a8f99]">
          <div className="flex w-[34px] shrink-0 flex-col border-r border-white">
            {sideTop.map((g, i) => <div key={i} className="flex h-[25px] items-center pl-[3px]"><Ic>{g}</Ic></div>)}
            <div className="mb-[3px] ml-[2px] mt-[2px] h-px w-[29px] bg-[#888]" />
            {sideBoxed.map((g, i) => <div key={i} className="mb-px ml-[2px] flex h-[24px] w-[23px] items-center justify-center border border-[#adadad] bg-[#e4e4e4]"><Ic>{g}</Ic></div>)}
            {[true, false].map((on, i) => <div key={i} className="mb-px ml-[2px] flex h-[24px] w-[23px] items-center justify-center border border-[#aaa]"><Ic><CheckBox on={on} /></Ic></div>)}
            <div className="ml-[2px] mt-[2px] h-px w-[29px] bg-[#888]" />
            <div className="mt-[3px] flex h-[28px] items-center border-b border-[#bbb] bg-white pl-[4px]">
              <Ic><path d="M1 2.500 3.500.5H19V18l-2 2.500H3L1 18z" fill="#ff9e20" stroke="#d07808" strokeWidth=".8" /><path d="M16.500 3v17M1.500 3h15L19 .8" stroke="#ffd080" strokeWidth="1" /><path d="M2.500 4v14" stroke="#ffc060" /></Ic>
              <svg viewBox="0 0 4 8" className="ml-[4px] h-[7px] w-[4px] shrink-0"><path d="M0 0v8l4-4z" fill="#000" /></svg>
            </div>
            <div className="mb-[3px] ml-[2px] mt-[3px] h-px w-[29px] bg-[#888]" />
            {sideMain.map((g, i) => <div key={i} className="flex h-[25px] shrink-0 items-center pl-[3px]"><Ic>{g}</Ic></div>)}
          </div>
          <div className="flex w-[16px] flex-col items-center bg-[#f0f0f0] pl-px">
            <div className="flex h-[17px] items-center"><svg viewBox="0 0 9 6" className="h-[6px] w-[9px]" fill="none"><path d="m.8 5 3.700-3.700L8.200 5" stroke="#444" strokeWidth="1.800" /></svg></div>
            <div className="h-[155px] w-full bg-[#cdcdcd]" />
            <div className="flex-1" />
            <div className="flex h-[19px] items-center"><svg viewBox="0 0 9 6" className="h-[6px] w-[9px]" fill="none"><path d="m.8 1 3.700 3.700L8.200 1" stroke="#444" strokeWidth="1.800" /></svg></div>
          </div>
        </div>
        <div className="flex w-[7px] shrink-0 items-center justify-end pr-px">
          <svg viewBox="0 0 5 13" className="h-[13px] w-[5px]"><path d="M4.500 0v13L.5 6.500z" fill="#333" /></svg>
        </div>
        <div className="h-full w-[1466px] shrink-0 border border-[#85888c] bg-white"><MindMap /></div>
        <div className="flex flex-1 items-center justify-end">
          <svg viewBox="0 0 5 16" className="h-[16px] w-[5px]"><path d="M4.500 0v16L0 8z" fill="#333" /></svg>
        </div>
      </div>
      {/* status bar */}
      <div className="flex flex-1 items-start pl-[2px]">
        <div className="flex h-[23px] w-[31px] flex-col items-center border border-[#adadad] bg-[#f6f6f6] font-['Liberation_Sans',sans-serif] text-[15px] leading-[17px] text-[#101c70]">
          <div className="flex items-baseline pt-px [-webkit-text-stroke:0.4px]"><Fit w={27}>AB<span className="text-[14px]">c</span></Fit></div>
          <div className="h-[3px] w-[26px] shrink-0 border-y border-[#444]" />
        </div>
      </div>
      {/* annotation over the window */}
      <svg viewBox="0 0 1534 1033" className="pointer-events-none absolute -left-px -top-px h-[1033px] w-[1534px]" fill="none">
        <path d="M860 516 116 90" stroke="#000" strokeOpacity=".22" strokeWidth="3" />
        <path d="M2.500 51.500h156.500v25.500H2.500z" stroke="#ff3030" strokeWidth="3" />
        <path d="M858 513.500 110 84" stroke="#f83434" strokeWidth="3" />
        <path d="M100.500 79 118 81.500 111.500 92.500z" fill="#f83434" stroke="#f83434" />
      </svg>
    </div>
  );
}
